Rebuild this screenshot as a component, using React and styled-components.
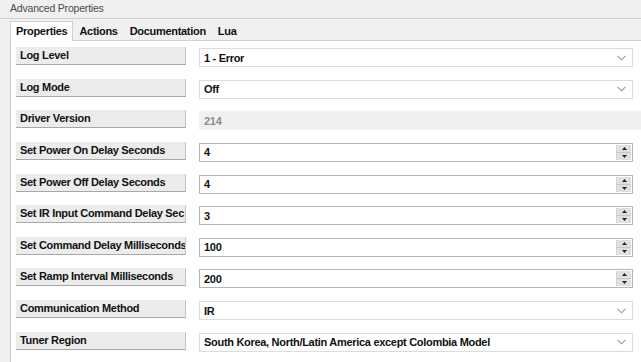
import React from 'react';
import styled, { createGlobalStyle } from 'styled-components';

const GlobalStyle = createGlobalStyle`
  html, body {
    margin: 0;
    padding: 0;
    background: #f0f0f0;
    font-family: "Liberation Sans", sans-serif;
  }
`;

const Window = styled.div`
  width: 641px;
  height: 362px;
  overflow: hidden;
  background: #f0f0f0;
`;

const Title = styled.div`
  height: 18px;
  line-height: 16px;
  padding-left: 10px;
  font-size: 10.5px;
  letter-spacing: -0.2px;
  color: #4a4a4a;
  border-bottom: 1px solid #d0d0d0;
`;

const TabStrip = styled.div`
  display: flex;
  align-items: flex-end;
  height: 21px;
  padding-left: 10px;
`;

const Tab = styled.div`
  height: ${(p) => (p.active ? '19px' : '17px')};
  line-height: ${(p) => (p.active ? '18px' : '17px')};
  padding: 0 5px;
  font-size: 11px;
  font-weight: bold;
  letter-spacing: -0.3px;
  color: #111;
  background: ${(p) => (p.active ? '#fff' : '#f0f0f0')};
  border: 1px solid ${(p) => (p.active ? '#d0d0d0' : 'transparent')};
  border-bottom: none;
  position: relative;
  top: ${(p) => (p.active ? '1px' : '0')};
`;

const Panel = styled.div`
  margin-left: 10px;
  height: 330px;
  background: #fff;
  border-left: 1px solid #c8c8c8;
  border-top: 1px solid #d0d0d0;
  padding: 6px 0 0 5px;
`;

const Grid = styled.div`
  display: grid;
  grid-auto-rows: 31.65px;
`;

const Row = styled.div`
  display: flex;
  align-items: flex-start;
`;

const Label = styled.div`
  width: 170px;
  height: 18px;
  margin-right: 13px;
  padding-left: 4px;
  box-sizing: border-box;
  background: #ececec;
  border-right: 1px solid #c4c4c4;
  border-bottom: 1px solid #a8a8a8;
  font-weight: bold;
  font-size: 11px;
  letter-spacing: -0.3px;
  line-height: 17px;
  color: #111;
  white-space: nowrap;
  overflow: hidden;
  text-overflow: clip;
`;

const Field = styled.div`
  display: flex;
  align-items: center;
  height: 19px;
  box-sizing: border-box;
  width: ${(p) => (p.wide ? '442px' : '434px')};
  margin-top: 1px;
  background: ${(p) => (p.readonly ? '#f0f0f0' : '#fff')};
  border: 1px solid ${(p) => (p.readonly ? '#f0f0f0' : p.spin ? '#b4b4b4' : '#dcdcdc')};
  padding-left: 4px;
  font-weight: bold;
  font-size: 11px;
  letter-spacing: -0.3px;
  color: ${(p) => (p.readonly ? '#8c8c8c' : '#111')};
`;

const Value = styled.span`
  flex: 1;
  white-space: nowrap;
`;

const Chevron = styled.svg`
  width: 9px;
  height: 6px;
  margin-right: 6px;
`;

const Spinner = styled.div`
  display: flex;
  flex-direction: column;
  width: 14px;
  height: 15px;
  margin-right: 1px;
  background: #e0e0e0;
  border-left: 1px solid #d4d4d4;
`;

const SpinHalf = styled.div`
  flex: 1;
  display: flex;
  align-items: center;
  justify-content: center;
  border-bottom: ${(p) => (p.top ? '1px solid #c8c8c8' : 'none')};
`;

const Arrow = ({ up }) => (
  <svg width="5" height="3" viewBox="0 0 5 3">
    <path d={up ? 'M0 3 L2.5 0 L5 3 Z' : 'M0 0 L2.5 3 L5 0 Z'} fill="#222" />
  </svg>
);

const rows = [
  { label: 'Log Level', value: '1 - Error', kind: 'select' },
  { label: 'Log Mode', value: 'Off', kind: 'select' },
  { label: 'Driver Version', value: '214', kind: 'readonly' },
  { label: 'Set Power On Delay Seconds', value: '4', kind: 'spin' },
  { label: 'Set Power Off Delay Seconds', value: '4', kind: 'spin' },
  { label: 'Set IR Input Command Delay Sec', value: '3', kind: 'spin' },
  { label: 'Set Command Delay Milliseconds', value: '100', kind: 'spin' },
  { label: 'Set Ramp Interval Milliseconds', value: '200', kind: 'spin' },
  { label: 'Communication Method', value: 'IR', kind: 'select' },
  { label: 'Tuner Region', value: 'South Korea, North/Latin America except Colombia Model', kind: 'select' },
];

const PropertyRow = ({ label, value, kind }) => (
  <Row>
    <Label>{label}</Label>
    <Field readonly={kind === 'readonly'} spin={kind === 'spin'} wide={kind === 'readonly'}>
      <Value>{value}</Value>
      {kind === 'select' && (
        <Chevron viewBox="0 0 9 6">
          <path d="M0.5 0.8 L4.5 4.8 L8.5 0.8" fill="none" stroke="#9a9a9a" strokeWidth="1.1" />
        </Chevron>
      )}
      {kind === 'spin' && (
        <Spinner>
          <SpinHalf top>
            <Arrow up />
          </SpinHalf>
          <SpinHalf>
            <Arrow />
          </SpinHalf>
        </Spinner>
      )}
    </Field>
  </Row>
);

export default function App() {
  return (
    <Window>
      <GlobalStyle />
      <Title>Advanced Properties</Title>
      <TabStrip>
        <Tab active>Properties</Tab>
        <Tab>Actions</Tab>
        <Tab>Documentation</Tab>
        <Tab>Lua</Tab>
      </TabStrip>
      <Panel>
        <Grid>
          {rows.map((r) => (
            <PropertyRow key={r.label} {...r} />
          ))}
        </Grid>
      </Panel>
    </Window>
  );
}
